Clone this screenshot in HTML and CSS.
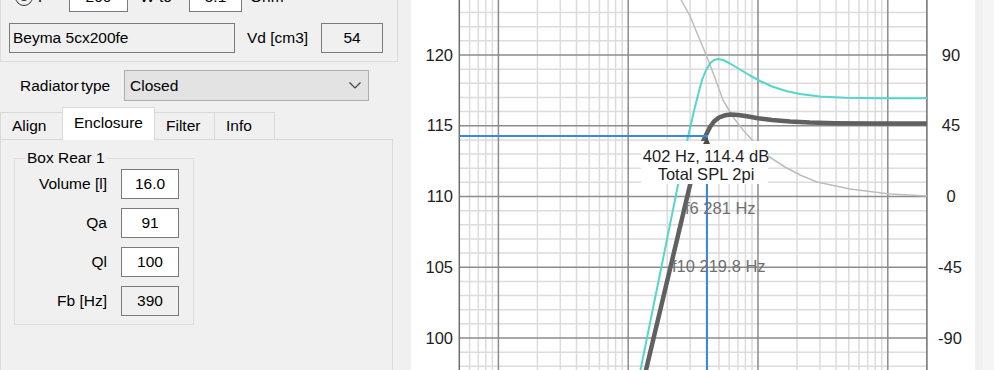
FILE: index.html
```html
<!DOCTYPE html>
<html>
  <head>
    <title>Enclosure</title>
    <link rel="stylesheet" href="styles.css">
  </head>
  <body>
    <div class="app">
      <div class="side">
        <div class="group">
          <div class="row">
            <span class="radio"></span>
            <span class="lbl lbl-p">P</span>
            <span class="tb w59">200</span>
            <span class="lbl lbl-wto">W to</span>
            <span class="tb w53">5.1</span>
            <span class="lbl lbl-ohm">Ohm</span>
          </div>
          <div class="row">
            <span class="tb ro name">Beyma 5cx200fe</span>
            <span class="lbl lbl-vd">Vd [cm3]</span>
            <span class="tb ro w62">54</span>
          </div>
        </div>

        <div class="radiator">
          <span class="lbl lbl-rad">Radiator type</span>
          <div class="combo">
            <span>Closed</span>
            <svg width="12" height="7" viewBox="0 0 12 7">
              <path d="M0.5 0.5 6 6 11.5 0.5" fill="none" stroke="#404040" stroke-width="1.2" />
            </svg>
          </div>
        </div>

        <div class="tabs">
          <div class="strip">
            <div class="tab t-align">Align</div>
            <div class="tab on t-encl">Enclosure</div>
            <div class="tab t-filter">Filter</div>
            <div class="tab t-info">Info</div>
          </div>
          <div class="page">
            <fieldset class="box">
              <legend>Box Rear 1</legend>
              <div class="frow">
                <span class="flbl">Volume [l]</span>
                <span class="tb w58">16.0</span>
              </div>
              <div class="frow">
                <span class="flbl">Qa</span>
                <span class="tb w58">91</span>
              </div>
              <div class="frow">
                <span class="flbl">Ql</span>
                <span class="tb w58">100</span>
              </div>
              <div class="frow">
                <span class="flbl">Fb [Hz]</span>
                <span class="tb ro w58">390</span>
              </div>
            </fieldset>
          </div>
        </div>
      </div>

      <svg class="chart" width="564" height="370" viewBox="411 0 564 370">
        <!-- grid -->
        <path class="minor" d="M469.6 0V370M478.3 0V370M485.8 0V370M492.4 0V370M537.4 0V370M560.3 0V370M576.5 0V370M589.1 0V370M599.4 0V370M608.1 0V370M615.6 0V370M622.2 0V370M667.2 0V370M690.1 0V370M706.3 0V370M718.9 0V370M729.2 0V370M737.9 0V370M745.4 0V370M752 0V370M797 0V370M819.9 0V370M836.1 0V370M848.7 0V370M859 0V370M867.7 0V370M875.2 0V370M881.8 0V370" />
        <path class="minor" d="M459.3 12.55H926.9M459.3 26.7H926.9M459.3 40.85H926.9M459.3 69.15H926.9M459.3 83.3H926.9M459.3 97.45H926.9M459.3 111.6H926.9M459.3 139.9H926.9M459.3 154.05H926.9M459.3 168.2H926.9M459.3 182.35H926.9M459.3 210.65H926.9M459.3 224.8H926.9M459.3 238.95H926.9M459.3 253.1H926.9M459.3 281.4H926.9M459.3 295.55H926.9M459.3 309.7H926.9M459.3 323.85H926.9M459.3 352.15H926.9M459.3 366.3H926.9" />
        <path class="major" d="M498.4 0V370M628.2 0V370M758 0V370M887.8 0V370M459.3 55H926.9M459.3 125.75H926.9M459.3 196.5H926.9M459.3 267.25H926.9M459.3 338H926.9" />
        <path class="frame" d="M459.3 0V370M926.9 0V370" />

        <!-- curves -->
        <path class="phase" d="M680 -2L690 16L697 33L707 57L715 78L723 100L733 117L743 130L755 143L768 156L785 167L800 175L817 182L850 189L890 194L927 196" />
        <path class="spl-cone" d="M636 392L640.5 370L678 185L682 165L686 146L690 128L694 111L698 95L702 80L706 70L710 63.5L714 60L718 59L723 60L730 63.5L740 69.5L750 75.5L760 81L772 86.5L786 91L800 94L820 96.5L845 97.8L880 98.2L927 98.2" />
        <path class="spl-total" d="M641 391L646 370L690 185L694 169L698 155L702 144L706 135L710 127L714 121.5L719 117.5L725 115.3L731 114.6L738 115L747 116.3L758 118.2L772 120L790 121.6L810 122.6L835 123.2L870 123.5L927 123.5" />

        <!-- cursor -->
        <path class="cursor" d="M459.3 136H707V372" />
        <rect class="tip" x="641" y="141" width="127" height="43" />
        <path class="tip-mark" d="M703 144 707 137 710 144Z" />
        <text class="tip-text" x="706" y="162">402 Hz, 114.4 dB</text>
        <text class="tip-text" x="706" y="180">Total SPL 2pi</text>

        <text class="mark" x="685" y="213.5">f6 281 Hz</text>
        <text class="mark" x="672" y="271.5">f10 219.8 Hz</text>

        <!-- axes -->
        <text class="ylab" x="453" y="60.5">120</text>
        <text class="ylab" x="453" y="131">115</text>
        <text class="ylab" x="453" y="202">110</text>
        <text class="ylab" x="453" y="272.5">105</text>
        <text class="ylab" x="453" y="343.5">100</text>
        <text class="ylab2" x="951" y="60.5">90</text>
        <text class="ylab2" x="951" y="131">45</text>
        <text class="ylab2" x="951" y="202">0</text>
        <text class="ylab2" x="950" y="272.5">-45</text>
        <text class="ylab2" x="950" y="343.5">-90</text>
      </svg>

      <div class="edge"><div class="edge-line"></div></div>
    </div>
  </body>
</html>
```

FILE: styles.css
```css
body {
  margin: 0;
  background: #f0f0f0;
  font-family: "Liberation Sans", Arial, sans-serif;
  font-size: 15.5px;
  color: #000000;
  overflow: hidden;
}
.app {
  display: flex;
  height: 370px;
  overflow: hidden;
}
.side {
  width: 398px;
  flex: none;
  margin-top: -30px;
}
.group {
  box-sizing: border-box;
  border: 1px solid #dcdcdc;
  padding: 11px 8px 8px;
  display: flex;
  flex-direction: column;
  gap: 11px;
}
.row {
  display: flex;
  align-items: center;
  height: 30px;
}
.lbl {
  white-space: nowrap;
}
.tb {
  box-sizing: border-box;
  height: 30px;
  border: 1px solid #7a7a7a;
  background: #ffffff;
  display: flex;
  align-items: center;
  justify-content: center;
  flex: none;
}
.tb.ro {
  background: #f0f0f0;
}
.tb.name {
  width: 226px;
  justify-content: flex-start;
  padding-left: 3px;
}
.w53 { width: 53px; }
.w58 { width: 58px; }
.w59 { width: 59px; }
.w62 { width: 62px; }
.radio {
  box-sizing: border-box;
  width: 18px;
  height: 18px;
  margin-left: 6px;
  border: 1px solid #333333;
  border-radius: 50%;
  display: flex;
  align-items: center;
  justify-content: center;
  flex: none;
}
.radio::after {
  content: "";
  width: 8px;
  height: 8px;
  border-radius: 50%;
  background: #333333;
}
.lbl-p {
  width: 31px;
  margin-left: 5px;
}
.lbl-wto {
  width: 49px;
  margin-left: 12px;
}
.lbl-ohm {
  margin-left: 8px;
}
.lbl-vd {
  width: 74px;
  margin-left: 12px;
}
.radiator {
  display: flex;
  align-items: center;
  height: 31px;
  margin-top: 8px;
}
.lbl-rad {
  width: 104px;
  margin-left: 20px;
  word-spacing: -2px;
}
.combo {
  box-sizing: border-box;
  width: 245px;
  height: 31px;
  border: 1px solid #adadad;
  background: #e3e3e3;
  display: flex;
  align-items: center;
  justify-content: space-between;
  padding: 0 7px 0 5px;
}
.tabs {
  margin-top: 6px;
}
.strip {
  display: flex;
  align-items: flex-end;
  height: 32px;
}
.tab {
  box-sizing: border-box;
  height: 27px;
  border: 1px solid #d9d9d9;
  border-bottom: none;
  margin-right: -1px;
  padding: 4px 0 0 11px;
  line-height: 18px;
  background: #f0f0f0;
}
.tab.on {
  height: 33px;
  margin-bottom: -1px;
  padding-top: 6px;
  background: #ffffff;
  position: relative;
  z-index: 1;
}
.t-align { width: 63px; }
.t-encl { width: 93px; }
.t-filter { width: 61px; }
.t-info { width: 61px; }
.page {
  box-sizing: border-box;
  width: 393px;
  height: 260px;
  border: 1px solid #d9d9d9;
  background: #f0f0f0;
  padding: 9px 0 0 13px;
}
.box {
  box-sizing: border-box;
  width: 180px;
  margin: 0;
  border: 1px solid #dcdcdc;
  padding: 2px 0 8px 0;
  display: flex;
  flex-direction: column;
  gap: 9px;
}
.box legend {
  margin-left: 10px;
  padding: 0 2px;
  line-height: 18px;
}
.frow {
  display: flex;
  align-items: center;
  height: 30px;
}
.flbl {
  width: 92px;
  margin-right: 14px;
  text-align: right;
}
.chart {
  flex: none;
  margin-left: 13px;
  background: #ffffff;
  font-family: "Liberation Sans", Arial, sans-serif;
  font-size: 16.5px;
}
.chart path {
  fill: none;
}
.minor {
  stroke: #dcdcdc;
  stroke-width: 1.5;
}
.major {
  stroke: #8c8c8c;
  stroke-width: 1.5;
}
.frame {
  stroke: #6e6e6e;
  stroke-width: 1.5;
}
.phase {
  stroke: #bdbdbd;
  stroke-width: 1.5;
  stroke-linejoin: round;
}
.spl-cone {
  stroke: #55d6cc;
  stroke-width: 2;
  stroke-linejoin: round;
}
.spl-total {
  stroke: #606060;
  stroke-width: 4.5;
  stroke-linejoin: round;
}
.cursor {
  stroke: #3b8ad6;
  stroke-width: 2;
}
.tip {
  fill: #ffffff;
}
.chart .tip-mark {
  fill: #4a4a4a;
}
.tip-text {
  fill: #1e1e1e;
  text-anchor: middle;
}
.mark {
  fill: #707070;
}
.ylab {
  fill: #1e1e1e;
  text-anchor: end;
}
.ylab2 {
  fill: #1e1e1e;
  text-anchor: middle;
}
.edge {
  width: 19px;
  flex: none;
  display: flex;
  justify-content: flex-end;
}
.edge-line {
  width: 11px;
  background: #f5f5f5;
}
```
